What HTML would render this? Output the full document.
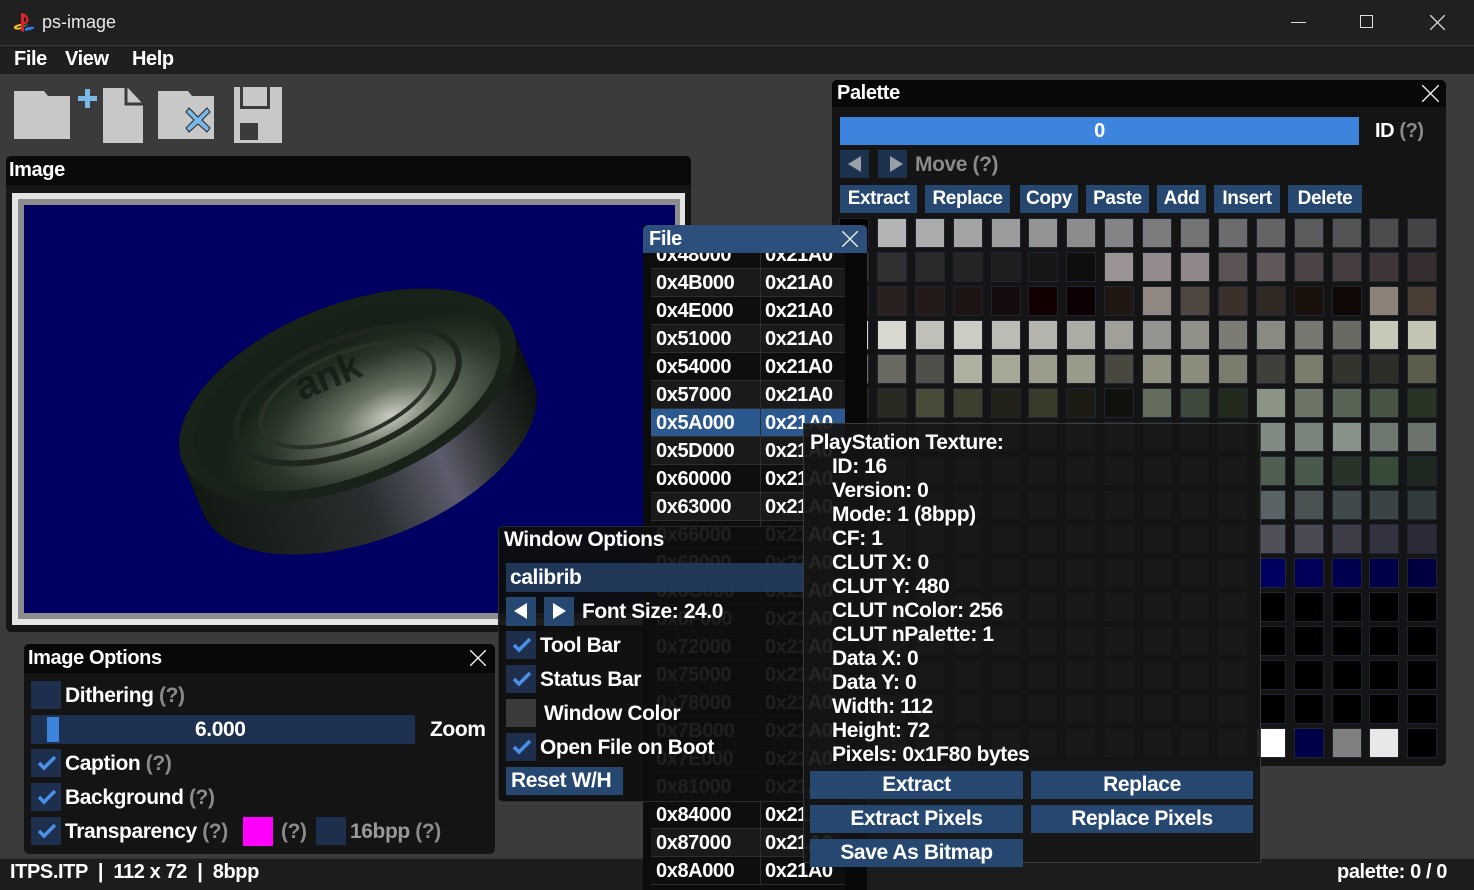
<!DOCTYPE html>
<html><head><meta charset="utf-8"><style>
*{margin:0;padding:0;box-sizing:border-box}
body{width:1474px;height:890px;overflow:hidden;background:#3b3b3b;font-family:"Liberation Sans",sans-serif;font-weight:bold;color:#fff;position:relative;font-size:19px;letter-spacing:-0.4px}
.a{position:absolute}
.t{position:absolute;white-space:nowrap;line-height:1}
.btn{position:absolute;background:#26476f;color:#fff;text-align:center;line-height:28px;white-space:nowrap}
.q{color:#8a8a8a}
.cb{position:absolute;width:30px;height:28px;background:#1d2f4c}
.cb svg{position:absolute;left:6px;top:6px}
.g{position:absolute;left:840px;top:219px;display:grid;grid-template-columns:repeat(16,28px);column-gap:9.9px;row-gap:6px}
.g i{display:block;width:28px;height:28px;background:#505050;outline:1px solid #1c2636}
.fr{position:absolute;left:651px;width:194px;height:28px;border-bottom:1px solid #2e2e2e;font-size:20px;line-height:28px}
.fr span{position:absolute;top:0}
.fr span:first-child{left:5px}.fr span:last-child{left:114px}
.fr:before{content:"";position:absolute;left:109px;top:0;bottom:0;border-left:1px solid #2e2e2e}
</style></head><body>
<!-- title bar -->
<div class="a" style="left:0;top:0;width:1474px;height:45px;background:#202020"></div>
<svg class="a" style="left:12px;top:11px" width="24" height="24" viewBox="0 0 24 24"><path d="M9 2 L9 20 L12 21 L12 6 C15 6 15 11 12 11 L12 13 C18 14 19 3 9 2Z" fill="#e0202a"/><path d="M2 17 C1 15 6 13 9 13 L9 15 C6 15 4 16 6 17 L9 16 L9 18 C6 19 3 19 2 17Z" fill="#f0c020"/><path d="M13 17 C16 16 20 15 22 16 C23 18 18 19 13 20Z" fill="#3080e0"/><path d="M12 14 L17 13 L12 16Z" fill="#20a050"/></svg>
<div class="t" style="left:42px;top:13px;font-weight:normal;font-size:18px;color:#e8e8e8;letter-spacing:0">ps-image</div>
<div class="a" style="left:1291px;top:22px;width:15px;height:1px;background:#ddd"></div>
<div class="a" style="left:1360px;top:15px;width:13px;height:13px;border:1px solid #ddd"></div>
<svg class="a" style="left:1430px;top:15px" width="15" height="15"><path d="M0 0L15 15M15 0L0 15" stroke="#ddd" stroke-width="1.3"/></svg>
<!-- menu -->
<div class="a" style="left:0;top:45px;width:1474px;height:29px;background:#1f1f1f;border-top:1px solid #3a3a3a"></div>
<div class="t" style="left:14px;top:49px;font-size:20px">File</div>
<div class="t" style="left:65px;top:49px;font-size:20px">View</div>
<div class="t" style="left:132px;top:49px;font-size:20px">Help</div>
<!-- toolbar icons -->
<svg class="a" style="left:10px;top:84px" width="290" height="64">
<path d="M4 7 H34 L38 12 H60 V55 H4Z" fill="#c8c8c8"/>
<path d="M93 4 H118 L133 20 V59 H93Z" fill="#c8c8c8"/><path d="M116 4 V20 H133" fill="none" stroke="#3b3b3b" stroke-width="3"/>
<path d="M75 5 H80 V12 H87 V17 H80 V24 H75 V17 H68 V12 H75Z" fill="#7ab8e8"/>
<path d="M148 7 H178 L182 12 H204 V55 H148Z" fill="#c8c8c8"/>
<path d="M179 24 L188 33 L197 24 L200 28 L192 36 L200 44 L197 48 L188 40 L179 48 L176 44 L184 36 L176 28Z" fill="#7ab8e8" stroke="#222" stroke-width="1"/>
<path d="M224 3 H272 V59 H224Z" fill="#c8c8c8"/><rect x="230" y="3" width="30" height="22" fill="#3b3b3b"/><rect x="233" y="3" width="24" height="19" fill="#c8c8c8"/><rect x="230" y="39" width="18" height="17" fill="#3b3b3b"/>
</svg>
<!-- Image window -->
<div class="a" style="left:6px;top:156px;width:685px;height:476px;background:#151515;border-radius:5px"></div>
<div class="a" style="left:6px;top:156px;width:685px;height:29px;background:#0a0a0a;border-radius:5px 5px 0 0"></div>
<div class="t" style="left:9px;top:160px;font-size:20px">Image</div>
<div class="a" style="left:12px;top:193px;width:673px;height:432px;background:#e4e4e4"></div>
<div class="a" style="left:18px;top:199px;width:662px;height:420px;background:#8c8c8c"></div>
<div class="a" style="left:24px;top:205px;width:651px;height:408px;background:#000062"></div>
<svg class="a" style="left:24px;top:205px" width="651" height="408">
<defs><radialGradient id="tp" cx="0.6" cy="0.72" r="0.55"><stop offset="0" stop-color="#c8ccc0"/><stop offset="0.3" stop-color="#6a7464"/><stop offset="0.7" stop-color="#2a362a"/><stop offset="1" stop-color="#162016"/></radialGradient>
<linearGradient id="sd" x1="0" y1="0" x2="1" y2="0"><stop offset="0" stop-color="#121812"/><stop offset="0.45" stop-color="#2a2e30"/><stop offset="0.68" stop-color="#5c5c6c"/><stop offset="0.85" stop-color="#262a28"/><stop offset="1" stop-color="#0e120e"/></linearGradient></defs>
<g transform="rotate(-22 330 220)">
<ellipse cx="335" cy="245" rx="178" ry="92" fill="url(#sd)"/>
<rect x="157" y="190" width="356" height="55" fill="url(#sd)"/>
<ellipse cx="335" cy="190" rx="178" ry="90" fill="#182218"/>
<ellipse cx="335" cy="190" rx="162" ry="80" fill="url(#tp)"/>
<ellipse cx="335" cy="190" rx="118" ry="56" fill="none" stroke="#1e261e" stroke-width="6"/>
<ellipse cx="335" cy="190" rx="92" ry="42" fill="none" stroke="#2a3228" stroke-width="4"/>
<text x="290" y="178" font-size="40" fill="#101810" opacity="0.7" font-family="Liberation Sans" font-weight="bold">ank</text>
</g></svg>
<!-- Palette window -->
<div class="a" style="left:832px;top:80px;width:614px;height:686px;background:#141414;border-radius:5px"></div>
<div class="a" style="left:832px;top:80px;width:614px;height:27px;background:#080808;border-radius:5px 5px 0 0"></div>
<div class="t" style="left:837px;top:83px;font-size:20px">Palette</div>
<svg class="a" style="left:1422px;top:85px" width="17" height="17"><path d="M0 0L17 17M17 0L0 17" stroke="#eee" stroke-width="1.4"/></svg>
<div class="a" style="left:840px;top:117px;width:519px;height:28px;background:#3d84df;text-align:center;line-height:28px;font-size:20px">0</div>
<div class="t" style="left:1375px;top:121px;font-size:20px">ID <span class="q">(?)</span></div>
<div class="a" style="left:840px;top:150px;width:29px;height:28px;background:#1c324e"></div>
<div class="a" style="left:878px;top:150px;width:29px;height:28px;background:#1c324e"></div>
<svg class="a" style="left:840px;top:150px" width="70" height="28"><path d="M8 14 L21 6 V22Z" fill="#9aa0a8"/><path d="M50 6 L63 14 L50 22Z" fill="#9aa0a8"/></svg>
<div class="t" style="left:915px;top:154px;font-size:21px;color:#8a8a8a">Move (?)</div>
<div class="btn" style="left:840px;top:185px;width:77px">Extract</div>
<div class="btn" style="left:925px;top:185px;width:85px">Replace</div>
<div class="btn" style="left:1020px;top:185px;width:58px">Copy</div>
<div class="btn" style="left:1086px;top:185px;width:63px">Paste</div>
<div class="btn" style="left:1157px;top:185px;width:49px">Add</div>
<div class="btn" style="left:1214px;top:185px;width:66px">Insert</div>
<div class="btn" style="left:1288px;top:185px;width:74px">Delete</div>
<div class="g">
<i style="background:#000"></i><i style="background:#b4b4b4"></i><i style="background:#acacac"></i><i style="background:#a4a4a4"></i><i style="background:#9c9c9c"></i><i style="background:#949494"></i><i style="background:#8c8c8c"></i><i style="background:#848484"></i><i style="background:#7c7c7c"></i><i style="background:#747474"></i><i style="background:#6c6c6c"></i><i style="background:#646464"></i><i style="background:#5c5c5c"></i><i style="background:#545454"></i><i style="background:#4c4c4c"></i><i style="background:#444"></i>
<i style="background:#383838"></i><i style="background:#303030"></i><i style="background:#2a2a2a"></i><i style="background:#242424"></i><i style="background:#1e1e1e"></i><i style="background:#161616"></i><i style="background:#0e0e0e"></i><i style="background:#9c9494"></i><i style="background:#948c8c"></i><i style="background:#908888"></i><i style="background:#5c5454"></i><i style="background:#605858"></i><i style="background:#4c4444"></i><i style="background:#463e3e"></i><i style="background:#3e3636"></i><i style="background:#362e2e"></i>
<i style="background:#2a2020"></i><i style="background:#2a2020"></i><i style="background:#241a1a"></i><i style="background:#1e1414"></i><i style="background:#140c0c"></i><i style="background:#120000"></i><i style="background:#0c0004"></i><i style="background:#201810"></i><i style="background:#908880"></i><i style="background:#504840"></i><i style="background:#3c302a"></i><i style="background:#302822"></i><i style="background:#1a100a"></i><i style="background:#100804"></i><i style="background:#8c8278"></i><i style="background:#4a3e34"></i>
<i style="background:#d8d8d0"></i><i style="background:#d8d8d0"></i><i style="background:#c0c0b8"></i><i style="background:#ccccc4"></i><i style="background:#bcbcb4"></i><i style="background:#b4b4ac"></i><i style="background:#acaca4"></i><i style="background:#a0a098"></i><i style="background:#949490"></i><i style="background:#909088"></i><i style="background:#7c7c74"></i><i style="background:#8a8a80"></i><i style="background:#787870"></i><i style="background:#6a6a62"></i><i style="background:#c8c8b8"></i><i style="background:#c4c4b4"></i>
<i style="background:#6a6a60"></i><i style="background:#6a6a60"></i><i style="background:#50504a"></i><i style="background:#b0b0a0"></i><i style="background:#a8a898"></i><i style="background:#9c9c8c"></i><i style="background:#9a9a88"></i><i style="background:#48483e"></i><i style="background:#909080"></i><i style="background:#8c8c7c"></i><i style="background:#7c7c6c"></i><i style="background:#40403a"></i><i style="background:#7c7c6a"></i><i style="background:#34342c"></i><i style="background:#2e2e28"></i><i style="background:#5c5c4c"></i>
<i style="background:#2a2a22"></i><i style="background:#2a2a22"></i><i style="background:#4a4a38"></i><i style="background:#3e3e2e"></i><i style="background:#222218"></i><i style="background:#3a3a2a"></i><i style="background:#1c1c14"></i><i style="background:#10100c"></i><i style="background:#646c5c"></i><i style="background:#404a3c"></i><i style="background:#222a1c"></i><i style="background:#8c9484"></i><i style="background:#6c7464"></i><i style="background:#5a6454"></i><i style="background:#485444"></i><i style="background:#2a3424"></i>
<i></i><i></i><i></i><i></i><i></i><i></i><i></i><i></i><i></i><i></i><i></i><i style="background:#808a80"></i><i style="background:#7a847a"></i><i style="background:#889288"></i><i style="background:#6e786e"></i><i style="background:#6c746c"></i>
<i></i><i></i><i></i><i></i><i></i><i></i><i></i><i></i><i></i><i></i><i></i><i style="background:#506050"></i><i style="background:#4a5a4a"></i><i style="background:#283428"></i><i style="background:#384a38"></i><i style="background:#1e281e"></i>
<i></i><i></i><i></i><i></i><i></i><i></i><i></i><i></i><i></i><i></i><i></i><i style="background:#5a6464"></i><i style="background:#4a5252"></i><i style="background:#404a4a"></i><i style="background:#3a4444"></i><i style="background:#323c3c"></i>
<i></i><i></i><i></i><i></i><i></i><i></i><i></i><i></i><i></i><i></i><i></i><i style="background:#505058"></i><i style="background:#4a4a52"></i><i style="background:#3e3e48"></i><i style="background:#343440"></i><i style="background:#2c2c38"></i>
<i></i><i></i><i></i><i></i><i></i><i></i><i></i><i></i><i></i><i></i><i></i><i style="background:#000060"></i><i style="background:#000058"></i><i style="background:#000050"></i><i style="background:#000048"></i><i style="background:#000040"></i>
<i></i><i></i><i></i><i></i><i></i><i></i><i></i><i></i><i></i><i></i><i></i><i style="background:#000"></i><i style="background:#000"></i><i style="background:#000"></i><i style="background:#000"></i><i style="background:#000"></i>
<i></i><i></i><i></i><i></i><i></i><i></i><i></i><i></i><i></i><i></i><i></i><i style="background:#000"></i><i style="background:#000"></i><i style="background:#000"></i><i style="background:#000"></i><i style="background:#000"></i>
<i></i><i></i><i></i><i></i><i></i><i></i><i></i><i></i><i></i><i></i><i></i><i style="background:#000"></i><i style="background:#000"></i><i style="background:#000"></i><i style="background:#000"></i><i style="background:#000"></i>
<i></i><i></i><i></i><i></i><i></i><i></i><i></i><i></i><i></i><i></i><i></i><i style="background:#000"></i><i style="background:#000"></i><i style="background:#000"></i><i style="background:#000"></i><i style="background:#000"></i>
<i></i><i></i><i></i><i></i><i></i><i></i><i></i><i></i><i></i><i></i><i></i><i style="background:#fff"></i><i style="background:#000048"></i><i style="background:#808080"></i><i style="background:#e8e8e8"></i><i style="background:#000"></i>
</div>
<!-- status bar -->
<div class="a" style="left:0;top:858px;width:1474px;height:32px;background:#1c1c1c;border-top:1px solid #333"></div>
<div class="t" style="left:10px;top:862px;font-size:20px;white-space:pre">ITPS.ITP  |  112 x 72  |  8bpp</div>
<div class="t" style="left:1337px;top:862px;font-size:20px">palette: 0 / 0</div>
<!-- File window -->
<div class="a" style="left:643px;top:225px;width:224px;height:665px;background:#0c0c0c;overflow:hidden">
<div class="a" style="left:202px;top:27px;width:22px;height:640px;background:#080808"></div>
</div>
<div class="a" style="left:643px;top:241px;width:224px;height:649px;overflow:hidden">
<div style="position:relative;left:-643px;top:-241px">
<div class="fr" style="top:241px;background:#0e0e0e"><span>0x48000</span><span>0x21A0</span></div>
<div class="fr" style="top:269px;background:#1a1a1a"><span>0x4B000</span><span>0x21A0</span></div>
<div class="fr" style="top:297px;background:#0e0e0e"><span>0x4E000</span><span>0x21A0</span></div>
<div class="fr" style="top:325px;background:#1a1a1a"><span>0x51000</span><span>0x21A0</span></div>
<div class="fr" style="top:353px;background:#0e0e0e"><span>0x54000</span><span>0x21A0</span></div>
<div class="fr" style="top:381px;background:#1a1a1a"><span>0x57000</span><span>0x21A0</span></div>
<div class="fr" style="top:409px;background:#2c5890"><span>0x5A000</span><span>0x21A0</span></div>
<div class="fr" style="top:437px;background:#1a1a1a"><span>0x5D000</span><span>0x21A0</span></div>
<div class="fr" style="top:465px;background:#0e0e0e"><span>0x60000</span><span>0x21A0</span></div>
<div class="fr" style="top:493px;background:#1a1a1a"><span>0x63000</span><span>0x21A0</span></div>
<div class="fr" style="top:521px;background:#0e0e0e"><span>0x66000</span><span>0x21A0</span></div>
<div class="fr" style="top:549px;background:#1a1a1a"><span>0x69000</span><span>0x21A0</span></div>
<div class="fr" style="top:577px;background:#0e0e0e"><span>0x6C000</span><span>0x21A0</span></div>
<div class="fr" style="top:605px;background:#1a1a1a"><span>0x6F000</span><span>0x21A0</span></div>
<div class="fr" style="top:633px;background:#0e0e0e"><span>0x72000</span><span>0x21A0</span></div>
<div class="fr" style="top:661px;background:#1a1a1a"><span>0x75000</span><span>0x21A0</span></div>
<div class="fr" style="top:689px;background:#0e0e0e"><span>0x78000</span><span>0x21A0</span></div>
<div class="fr" style="top:717px;background:#1a1a1a"><span>0x7B000</span><span>0x21A0</span></div>
<div class="fr" style="top:745px;background:#0e0e0e"><span>0x7E000</span><span>0x21A0</span></div>
<div class="fr" style="top:773px;background:#1a1a1a"><span>0x81000</span><span>0x21A0</span></div>
<div class="fr" style="top:801px;background:#0e0e0e"><span>0x84000</span><span>0x21A0</span></div>
<div class="fr" style="top:829px;background:#1a1a1a"><span>0x87000</span><span>0x21A0</span></div>
<div class="fr" style="top:857px;background:#0e0e0e"><span>0x8A000</span><span>0x21A0</span></div>
</div></div>
<div class="a" style="left:643px;top:225px;width:224px;height:28px;background:#2c4f7c;border-radius:5px 5px 0 0"></div>
<div class="t" style="left:649px;top:229px;font-size:20px">File</div>
<svg class="a" style="left:842px;top:231px" width="16" height="16"><path d="M0 0L16 16M16 0L0 16" stroke="#eee" stroke-width="1.4"/></svg>
<!-- Image Options -->
<div class="a" style="left:24px;top:644px;width:471px;height:210px;background:#141414;border-radius:5px"></div>
<div class="a" style="left:24px;top:644px;width:471px;height:29px;background:#080808;border-radius:5px 5px 0 0"></div>
<div class="t" style="left:28px;top:648px;font-size:20px">Image Options</div>
<svg class="a" style="left:470px;top:650px" width="16" height="16"><path d="M0 0L16 16M16 0L0 16" stroke="#eee" stroke-width="1.4"/></svg>
<div class="cb" style="left:31px;top:681px"></div>
<div class="t" style="left:65px;top:685px;font-size:21px">Dithering <span class="q">(?)</span></div>
<div class="a" style="left:31px;top:715px;width:384px;height:29px;background:#1e3050"></div>
<div class="a" style="left:47px;top:717px;width:12px;height:25px;background:#3d84df"></div>
<div class="t" style="left:195px;top:719px;font-size:21px">6.000</div>
<div class="t" style="left:430px;top:719px;font-size:21px">Zoom</div>
<div class="cb" style="left:31px;top:749px"><svg width="20" height="16"><path d="M2 8L7 13L18 2" stroke="#4a90e8" stroke-width="3.5" fill="none"/></svg></div>
<div class="t" style="left:65px;top:753px;font-size:21px">Caption <span class="q">(?)</span></div>
<div class="cb" style="left:31px;top:783px"><svg width="20" height="16"><path d="M2 8L7 13L18 2" stroke="#4a90e8" stroke-width="3.5" fill="none"/></svg></div>
<div class="t" style="left:65px;top:787px;font-size:21px">Background <span class="q">(?)</span></div>
<div class="cb" style="left:31px;top:817px"><svg width="20" height="16"><path d="M2 8L7 13L18 2" stroke="#4a90e8" stroke-width="3.5" fill="none"/></svg></div>
<div class="t" style="left:65px;top:821px;font-size:21px">Transparency <span class="q">(?)</span></div>
<div class="a" style="left:243px;top:817px;width:30px;height:29px;background:#ff00ff"></div>
<div class="t q" style="left:281px;top:821px;font-size:21px">(?)</div>
<div class="cb" style="left:316px;top:817px"></div>
<div class="t" style="left:350px;top:821px;font-size:21px;color:#999">16bpp <span class="q">(?)</span></div>
<!-- Window Options -->
<div class="a" style="left:498px;top:526px;width:310px;height:276px;background:rgba(14,14,14,0.93);border-radius:5px;border:1px solid #2a2a2a"></div>
<div class="t" style="left:504px;top:529px;font-size:21px">Window Options</div>
<div class="a" style="left:506px;top:563px;width:300px;height:29px;background:rgba(34,58,92,0.95)"></div>
<div class="t" style="left:510px;top:567px;font-size:21px">calibrib</div>
<div class="a" style="left:506px;top:597px;width:30px;height:29px;background:#26476f"></div>
<div class="a" style="left:544px;top:597px;width:30px;height:29px;background:#26476f"></div>
<svg class="a" style="left:506px;top:597px" width="70" height="29"><path d="M8 14 L21 6 V22Z" fill="#fff"/><path d="M47 6 L60 14 L47 22Z" fill="#fff"/></svg>
<div class="t" style="left:582px;top:601px;font-size:21px">Font Size: 24.0</div>
<div class="cb" style="left:506px;top:631px"><svg width="20" height="16"><path d="M2 8L7 13L18 2" stroke="#4a90e8" stroke-width="3.5" fill="none"/></svg></div>
<div class="t" style="left:540px;top:635px;font-size:21px">Tool Bar</div>
<div class="cb" style="left:506px;top:665px"><svg width="20" height="16"><path d="M2 8L7 13L18 2" stroke="#4a90e8" stroke-width="3.5" fill="none"/></svg></div>
<div class="t" style="left:540px;top:669px;font-size:21px">Status Bar</div>
<div class="cb" style="left:506px;top:699px;background:#3b3b3b"></div>
<div class="t" style="left:544px;top:703px;font-size:21px">Window Color</div>
<div class="cb" style="left:506px;top:733px"><svg width="20" height="16"><path d="M2 8L7 13L18 2" stroke="#4a90e8" stroke-width="3.5" fill="none"/></svg></div>
<div class="t" style="left:540px;top:737px;font-size:21px">Open File on Boot</div>
<div class="btn" style="left:506px;top:767px;width:117px;font-size:21px;text-align:left;padding-left:5px">Reset W/H</div>
<!-- tooltip -->
<div class="a" style="left:803px;top:423px;width:458px;height:440px;background:rgba(20,20,20,0.93);border:1px solid #3a3a3a"></div>
<div class="t" style="left:810px;top:431px;font-size:21px;line-height:24px">PlayStation Texture:</div>
<div class="t" style="left:832px;top:455px;font-size:21px;line-height:24px">ID: 16<br>Version: 0<br>Mode: 1 (8bpp)<br>CF: 1<br>CLUT X: 0<br>CLUT Y: 480<br>CLUT nColor: 256<br>CLUT nPalette: 1<br>Data X: 0<br>Data Y: 0<br>Width: 112<br>Height: 72<br>Pixels: 0x1F80 bytes</div>
<div class="btn" style="left:810px;top:771px;width:213px;font-size:21px">Extract</div>
<div class="btn" style="left:1031px;top:771px;width:222px;font-size:21px">Replace</div>
<div class="btn" style="left:810px;top:805px;width:213px;font-size:21px">Extract Pixels</div>
<div class="btn" style="left:1031px;top:805px;width:222px;font-size:21px">Replace Pixels</div>
<div class="btn" style="left:810px;top:839px;width:213px;font-size:21px">Save As Bitmap</div>
</body></html>
